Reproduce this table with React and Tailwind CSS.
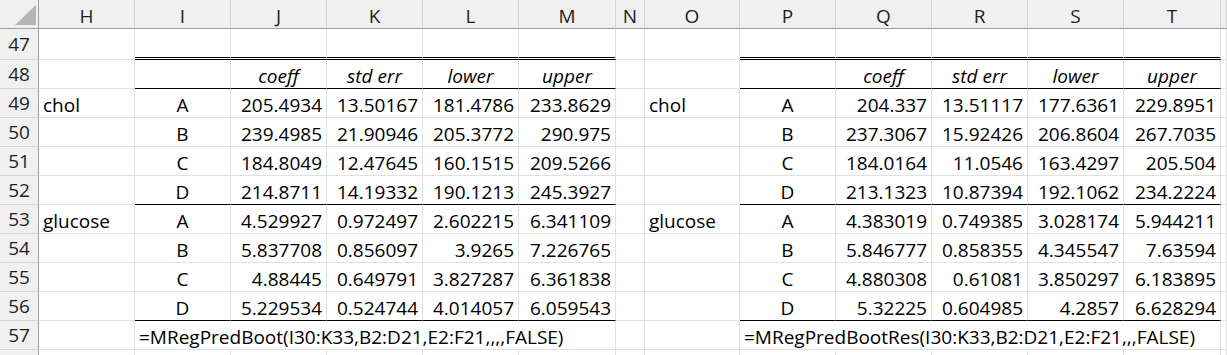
import React from "react";

const COLS = ["H", "I", "J", "K", "L", "M", "N", "O", "P", "Q", "R", "S", "T", ""];

const hdr = ["coeff", "std err", "lower", "upper"];

const left = [
  ["chol", "A", "205.4934", "13.50167", "181.4786", "233.8629"],
  ["", "B", "239.4985", "21.90946", "205.3772", "290.975"],
  ["", "C", "184.8049", "12.47645", "160.1515", "209.5266"],
  ["", "D", "214.8711", "14.19332", "190.1213", "245.3927"],
  ["glucose", "A", "4.529927", "0.972497", "2.602215", "6.341109"],
  ["", "B", "5.837708", "0.856097", "3.9265", "7.226765"],
  ["", "C", "4.88445", "0.649791", "3.827287", "6.361838"],
  ["", "D", "5.229534", "0.524744", "4.014057", "6.059543"],
];

const right = [
  ["chol", "A", "204.337", "13.51117", "177.6361", "229.8951"],
  ["", "B", "237.3067", "15.92426", "206.8604", "267.7035"],
  ["", "C", "184.0164", "11.0546", "163.4297", "205.504"],
  ["", "D", "213.1323", "10.87394", "192.1062", "234.2224"],
  ["glucose", "A", "4.383019", "0.749385", "3.028174", "5.944211"],
  ["", "B", "5.846777", "0.858355", "4.345547", "7.63594"],
  ["", "C", "4.880308", "0.61081", "3.850297", "6.183895"],
  ["", "D", "5.32225", "0.604985", "4.2857", "6.628294"],
];

const GRID =
  "grid grid-cols-[39px_96px_96px_96px_96px_96px_97px_29px_95px_96px_96px_96px_96px_97px_6px]";

// column index within COLS: H=0, I=1 .. M=5, N=6, O=7, P=8 .. T=12, U=13
const inTable = (c) => (c >= 1 && c <= 5) || (c >= 8 && c <= 12);

function Cell({ children, align = "left", italic = false, border = "normal", h }) {
  const alignCls =
    align === "right" ? "justify-end pr-[4px]" : align === "center" ? "justify-center" : "justify-start pl-[4px]";
  let b = "border-b border-[#e1e1e1]";
  if (border === "double") b = "border-b-[3px] border-double border-b-black";
  else if (border === "solid") b = "border-b border-b-black";
  return (
    <div
      className={`flex items-end whitespace-nowrap border-r border-r-[#e1e1e1] ${b} ${alignCls} ${h} ${
        italic ? "italic" : ""
      } leading-[24px]`}
    >
      {children}
    </div>
  );
}

function RowHead({ n, h }) {
  return (
    <div
      className={`flex items-center justify-center bg-[#f0f0f0] border-r border-r-[#9e9e9e] border-b border-b-[#d4d4d4] ${h} leading-[24px] text-[#1f1f1f]`}
    >
      {n}
    </div>
  );
}

export default function App() {
  const rows = [];

  // row 47
  rows.push(
    <React.Fragment key="r47">
      <RowHead n={47} h="h-[31px]" />
      {COLS.map((c, i) => (
        <Cell key={i} h="h-[31px]" border={inTable(i) ? "double" : "normal"} />
      ))}
    </React.Fragment>
  );

  // row 48 headers
  rows.push(
    <React.Fragment key="r48">
      <RowHead n={48} h="h-[29px]" />
      {COLS.map((c, i) => {
        let txt = "";
        if (i >= 2 && i <= 5) txt = hdr[i - 2];
        if (i >= 9 && i <= 12) txt = hdr[i - 9];
        return (
          <Cell key={i} h="h-[29px]" align="center" italic border={inTable(i) ? "solid" : "normal"}>
            {txt}
          </Cell>
        );
      })}
    </React.Fragment>
  );

  for (let r = 0; r < 8; r++) {
    const rowNum = 49 + r;
    const solid = r === 3 || r === 7;
    const L = left[r];
    const R = right[r];
    rows.push(
      <React.Fragment key={"r" + rowNum}>
        <RowHead n={rowNum} h="h-[29px]" />
        {COLS.map((c, i) => {
          const border = solid && inTable(i) ? "solid" : "normal";
          let txt = "";
          let align = "left";
          if (i <= 5) {
            txt = L[i];
            align = i === 0 ? "left" : i === 1 ? "center" : "right";
          } else if (i >= 7 && i <= 12) {
            txt = R[i - 7];
            align = i === 7 ? "left" : i === 8 ? "center" : "right";
          }
          return (
            <Cell key={i} h="h-[29px]" align={align} border={border}>
              {txt}
            </Cell>
          );
        })}
      </React.Fragment>
    );
  }

  // row 57 formulas
  rows.push(
    <React.Fragment key="r57">
      <RowHead n={57} h="h-[29px]" />
      <Cell h="h-[29px]" />
      <div className="col-span-5 flex items-end h-[29px] pl-[4px] whitespace-nowrap border-r border-r-[#e1e1e1] border-b border-b-[#e1e1e1] leading-[24px]">
        =MRegPredBoot(I30:K33,B2:D21,E2:F21,,,,FALSE)
      </div>
      <Cell h="h-[29px]" />
      <Cell h="h-[29px]" />
      <div className="col-span-5 flex items-end h-[29px] pl-[4px] whitespace-nowrap border-r border-r-[#e1e1e1] border-b border-b-[#e1e1e1] leading-[24px]">
        =MRegPredBootRes(I30:K33,B2:D21,E2:F21,,,FALSE)
      </div>
      <Cell h="h-[29px]" />
    </React.Fragment>
  );

  // row 58 partial (its number lies below the visible area)
  rows.push(
    <React.Fragment key="r58">
      <RowHead n="" h="h-[29px]" />
      {COLS.map((c, i) => (
        <Cell key={i} h="h-[29px]" />
      ))}
    </React.Fragment>
  );

  return (
    <div className="w-[1227px] h-[355px] overflow-hidden bg-white text-black text-[19px] font-['Open_Sans','Liberation_Sans',sans-serif]">
      <div className={GRID}>
        {/* header row */}
        <div className="relative h-[29px] bg-[#f0f0f0] border-r border-r-[#9e9e9e] border-b border-b-[#9e9e9e]">
          <svg className="absolute left-0 top-0" width="38" height="28" viewBox="0 0 38 28">
            <polygon points="36,5 36,25 15,25" fill="#b4b4b4" />
          </svg>
        </div>
        {COLS.map((c, i) => (
          <div
            key={i}
            className="flex items-end justify-center h-[29px] bg-[#f0f0f0] border-r border-r-[#d4d4d4] border-b border-b-[#9e9e9e] leading-[24px] text-[#1f1f1f]"
          >
            {c}
          </div>
        ))}
        {rows}
      </div>
    </div>
  );
}
